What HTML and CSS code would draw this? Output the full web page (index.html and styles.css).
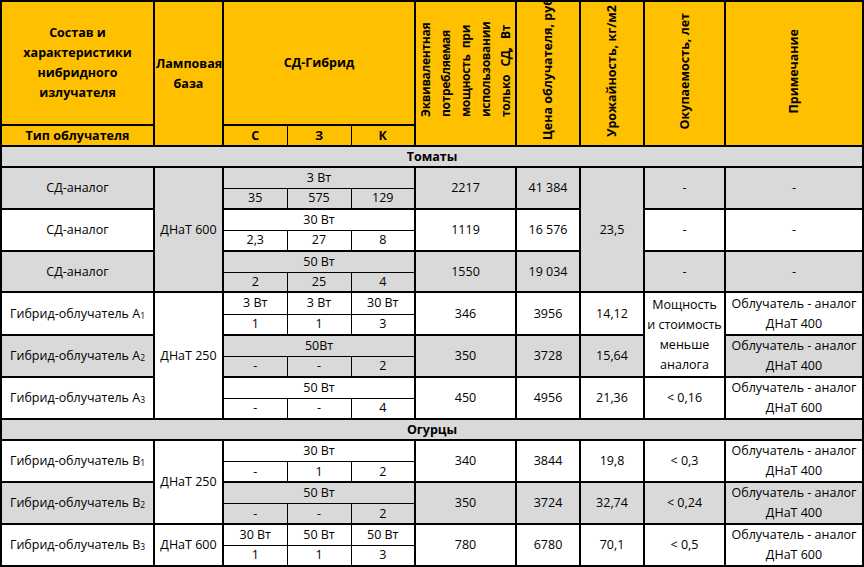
FILE: index.html
```html
<!DOCTYPE html>
<html lang="ru">
<head>
<meta charset="utf-8">
<title>Таблица облучателей</title>
<link rel="stylesheet" href="styles.css">
</head>
<body>
<table class="t">
  <colgroup>
    <col class="c1"><col class="c2"><col class="c3"><col class="c4"><col class="c5">
    <col class="c6"><col class="c7"><col class="c8"><col class="c9"><col class="c10">
  </colgroup>
  <tr class="h h1">
    <td class="ml">Состав и<br>характеристики<br>нибридного<br>излучателя</td>
    <td rowspan="2" class="ml">Ламповая<br>база</td>
    <td colspan="3">СД-Гибрид</td>
    <td rowspan="2" class="v"><div class="vw"><div class="vt eq">Эквивалентная<br>потребляемая<br>мощность при<br>использовании<br>только СД, Вт</div></div></td>
    <td rowspan="2" class="v"><div class="vw top"><div class="vt price">Цена облучателя, руб.</div></div></td>
    <td rowspan="2" class="v"><div class="vw"><div class="vt">Урожайность, кг/м2</div></div></td>
    <td rowspan="2" class="v"><div class="vw"><div class="vt">Окупаемость, лет</div></div></td>
    <td rowspan="2" class="v"><div class="vw"><div class="vt">Примечание</div></div></td>
  </tr>
  <tr class="h h2">
    <td>Тип облучателя</td>
    <td class="hs">С</td>
    <td class="hs">З</td>
    <td class="hs">К</td>
  </tr>

  <tr class="sec"><td colspan="10">Томаты</td></tr>

  <tr class="g">
    <td rowspan="2">СД-аналог</td>
    <td rowspan="6">ДНаТ 600</td>
    <td colspan="3" class="st">3 Вт</td>
    <td rowspan="2">2217</td>
    <td rowspan="2">41 384</td>
    <td rowspan="6">23,5</td>
    <td rowspan="2">-</td>
    <td rowspan="2">-</td>
  </tr>
  <tr class="g">
    <td class="sb">35</td><td class="sb">575</td><td class="sb">129</td>
  </tr>

  <tr>
    <td rowspan="2">СД-аналог</td>
    <td colspan="3" class="st">30 Вт</td>
    <td rowspan="2">1119</td>
    <td rowspan="2">16 576</td>
    <td rowspan="2">-</td>
    <td rowspan="2">-</td>
  </tr>
  <tr>
    <td class="sb">2,3</td><td class="sb">27</td><td class="sb">8</td>
  </tr>

  <tr class="g">
    <td rowspan="2">СД-аналог</td>
    <td colspan="3" class="st">50 Вт</td>
    <td rowspan="2">1550</td>
    <td rowspan="2">19 034</td>
    <td rowspan="2">-</td>
    <td rowspan="2">-</td>
  </tr>
  <tr class="g short">
    <td class="sb">2</td><td class="sb">25</td><td class="sb">4</td>
  </tr>

  <tr class="tall">
    <td rowspan="2">Гибрид-облучатель А<span class="sub">1</span></td>
    <td rowspan="6">ДНаТ 250</td>
    <td class="st">3 Вт</td><td class="st">3 Вт</td><td class="st">30 Вт</td>
    <td rowspan="2">346</td>
    <td rowspan="2">3956</td>
    <td rowspan="2">14,12</td>
    <td rowspan="4" class="ml">Мощность<br>и стоимость<br>меньше<br>аналога</td>
    <td rowspan="2" class="ml">Облучатель - аналог<br>ДНаТ 400</td>
  </tr>
  <tr>
    <td class="sb">1</td><td class="sb">1</td><td class="sb">3</td>
  </tr>

  <tr class="g">
    <td rowspan="2">Гибрид-облучатель А<span class="sub">2</span></td>
    <td colspan="3" class="st">50Вт</td>
    <td rowspan="2">350</td>
    <td rowspan="2">3728</td>
    <td rowspan="2">15,64</td>
    <td rowspan="2" class="ml">Облучатель - аналог<br>ДНаТ 400</td>
  </tr>
  <tr class="g">
    <td class="sb">-</td><td class="sb">-</td><td class="sb">2</td>
  </tr>

  <tr>
    <td rowspan="2">Гибрид-облучатель А<span class="sub">3</span></td>
    <td colspan="3" class="st">50 Вт</td>
    <td rowspan="2">450</td>
    <td rowspan="2">4956</td>
    <td rowspan="2">21,36</td>
    <td rowspan="2">&lt; 0,16</td>
    <td rowspan="2" class="ml">Облучатель - аналог<br>ДНаТ 600</td>
  </tr>
  <tr>
    <td class="sb">-</td><td class="sb">-</td><td class="sb">4</td>
  </tr>

  <tr class="sec"><td colspan="10">Огурцы</td></tr>

  <tr>
    <td rowspan="2">Гибрид-облучатель В<span class="sub">1</span></td>
    <td rowspan="4">ДНаТ 250</td>
    <td colspan="3" class="st">30 Вт</td>
    <td rowspan="2">340</td>
    <td rowspan="2">3844</td>
    <td rowspan="2">19,8</td>
    <td rowspan="2">&lt; 0,3</td>
    <td rowspan="2" class="ml">Облучатель - аналог<br>ДНаТ 400</td>
  </tr>
  <tr class="short">
    <td class="sb">-</td><td class="sb">1</td><td class="sb">2</td>
  </tr>

  <tr class="g">
    <td rowspan="2">Гибрид-облучатель В<span class="sub">2</span></td>
    <td colspan="3" class="st">50 Вт</td>
    <td rowspan="2">350</td>
    <td rowspan="2">3724</td>
    <td rowspan="2">32,74</td>
    <td rowspan="2">&lt; 0,24</td>
    <td rowspan="2" class="ml">Облучатель - аналог<br>ДНаТ 400</td>
  </tr>
  <tr class="g short">
    <td class="sb">-</td><td class="sb">-</td><td class="sb">2</td>
  </tr>

  <tr>
    <td rowspan="2">Гибрид-облучатель В<span class="sub">3</span></td>
    <td rowspan="2">ДНаТ 600</td>
    <td class="st">30 Вт</td><td class="st">50 Вт</td><td class="st">50 Вт</td>
    <td rowspan="2">780</td>
    <td rowspan="2">6780</td>
    <td rowspan="2">70,1</td>
    <td rowspan="2">&lt; 0,5</td>
    <td rowspan="2" class="ml">Облучатель - аналог<br>ДНаТ 600</td>
  </tr>
  <tr>
    <td class="sb">1</td><td class="sb">1</td><td class="sb">3</td>
  </tr>
</table>
</body>
</html>
```
FILE: styles.css
```css
html, body {
  margin: 0;
  padding: 0;
  background: #ffffff;
}
body {
  font-family: "Open Sans", "Noto Sans", "DejaVu Sans", sans-serif;
  font-size: 12.5px;
  color: #000000;
}
.t {
  border-collapse: collapse;
  table-layout: fixed;
  width: 864px;
}
.c1 { width: 153px; }
.c2 { width: 69px; }
.c3 { width: 64px; }
.c4 { width: 64px; }
.c5 { width: 64px; }
.c6 { width: 101px; }
.c7 { width: 64px; }
.c8 { width: 64px; }
.c9 { width: 81px; }
.c10 { width: 138px; }

.t td {
  border: 2px solid #000000;
  padding: 0 1px;
  text-align: center;
  vertical-align: middle;
  line-height: 16px;
  white-space: nowrap;
  overflow: hidden;
  background: #ffffff;
}
.t tr { height: 21px; }
.t tr.short { height: 20px; }
.t tr.tall { height: 22px; }

.t tr.g td { background: #d9d9d9; }

.t .ml { line-height: 20px; }

.t tr.h td {
  background: #ffc000;
  font-weight: bold;
}
.t tr.h1 { height: 124px; }
.t tr.h2 { height: 21px; }
.t td.hs {
  border-left-width: 1px;
  border-right-width: 1px;
}
.t td.v {
  padding: 0;
  vertical-align: top;
}
.vw {
  height: 138px;
  display: flex;
  align-items: center;
  justify-content: center;
}
.vw.top { align-items: flex-start; }
.vt {
  writing-mode: vertical-rl;
  transform: rotate(180deg);
  white-space: nowrap;
  line-height: 20px;
}
.vt.eq {
  height: 92px;
  font-size: 12px;
  letter-spacing: -0.3px;
  text-align: justify;
  text-align-last: justify;
}
.vt.price {
  height: 138px;
  overflow: hidden;
  text-align: start;
}

.t tr.sec td {
  background: #d9d9d9;
  font-weight: bold;
}

.t td.st {
  border-bottom-width: 1px;
  border-left-width: 1px;
  border-right-width: 1px;
}
.t td.sb {
  border-top-width: 1px;
  border-left-width: 1px;
  border-right-width: 1px;
}
.sub {
  font-size: 8.5px;
  vertical-align: -1px;
  line-height: 0;
}
```
